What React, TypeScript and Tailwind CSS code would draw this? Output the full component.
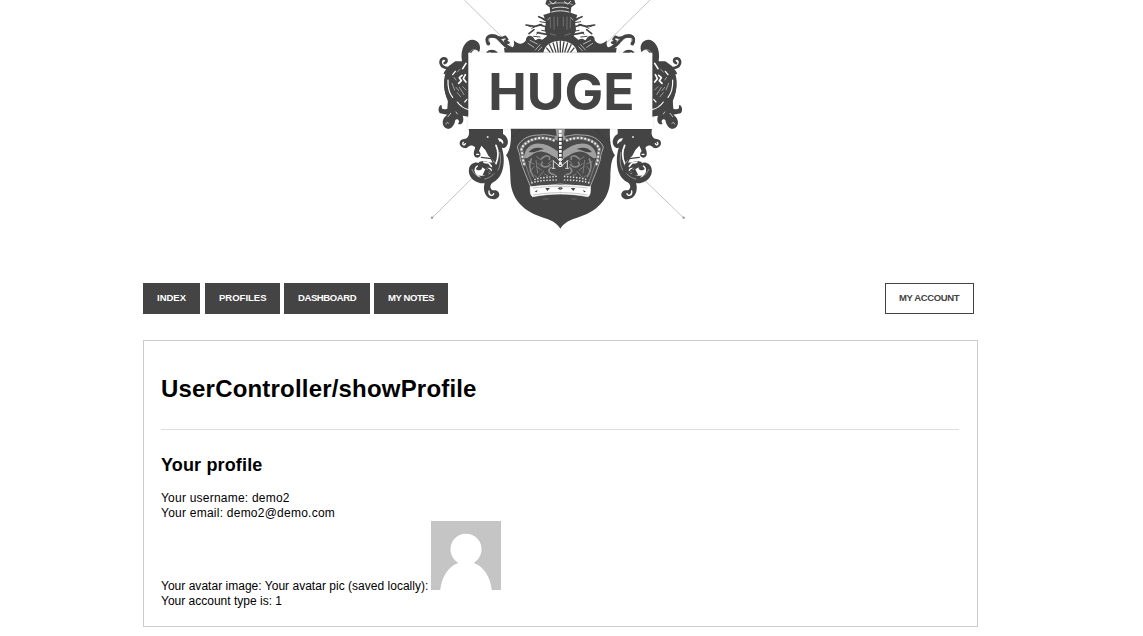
const DARK = "#444444";

function Scrollwork() {
  return (
    <g fill="none" stroke={DARK} strokeLinecap="round" strokeLinejoin="round">
      {/* outer upper curls */}
      <path fill={DARK} stroke="none" d="M126 184C119 142 140 118 158 119C178 121 185 140 177 157C172 146 158 146 154 160L148 160V346C118 342 96 328 84 304C68 268 68 226 86 198L106 184Z" />
      <path strokeWidth="8" d="M88 204C58 206 56 178 70 175C82 174 82 186 74 189" />
      <path strokeWidth="6" d="M74 220C80 206 92 202 100 198M76 240C74 262 78 284 88 300" />
      <g stroke="#fff" strokeWidth="4">
        <path d="M146 166C148 152 158 146 168 150" stroke="#bbb" strokeWidth="2" />
        <path d="M138 190L128 206M126 226L118 233L124 242L116 250M136 224L130 236L138 246" strokeWidth="5" />
        <path d="M106 214L98 224" strokeWidth="4" />
        <path d="M84 240C83 262 88 280 98 292M112 306C122 320 132 326 146 329M141 298L134 306" strokeWidth="3.5" />
        <path d="M96 250L104 270M120 208L112 216M112 278L122 290M102 232L108 240M118 262L132 284M108 262L116 272M128 260L138 270" strokeWidth="2" stroke="#ccc" />
      </g>
      {/* lower outer curls */}
      <path fill={DARK} stroke="none" d="M84 298L98 318C114 322 128 334 146 336V350L128 347C134 364 126 376 114 372C122 362 112 354 106 360C100 392 76 392 70 376C64 360 74 350 82 344L60 340C52 330 56 320 64 314C62 328 70 330 82 326Z" />
      <path strokeWidth="7" d="M62 320C58 330 62 338 74 336M74 364C70 384 94 386 92 374" />
      <path stroke="#ddd" strokeWidth="2.5" d="M92 340L84 350M108 336L112 342M78 372C80 366 84 366 86 370" />
      {/* inner upper scroll */}
      <path strokeWidth="11" d="M205 131C196 112 208 104 225 109C244 116 250 144 286 151" />
      <path strokeWidth="7" d="M218 109L246 114L256 110L262 118L254 124L266 128L252 132" />
      <path strokeWidth="2" stroke="#ddd" d="M228 116L240 128M244 118L252 126M208 114C204 118 206 124 208 126" />
      <path strokeWidth="6" d="M202 158C208 150 222 150 230 158M214 158H224" />
      <path fill={DARK} stroke="none" d="M252 143C275 148 286 144 281 121C294 134 309 135 318 121C317 110 326 103 338 110L346 121C356 112 363 117 369 121L379 158H254Z" />
      <path strokeWidth="2" stroke="#eee" d="M324 130L342 142M330 121L352 132M346 150L360 134M355 152L368 138" />
      {/* plume */}
      <path strokeWidth="5" d="M318 75L344 79L365 74M327 101L342 89M365 54L378 62M358 74L382 82M352 98L380 103M356 50L374 58" />
      <path strokeWidth="3" d="M335 85L350 78M350 103L356 96M365 91L380 94M341 109L360 111M322 76L332 80M360 65L384 69" />
      {/* foliage under the banner */}
      <path fill={DARK} stroke="none" d="M146 387H249V402C266 410 270 436 253 444C238 446 232 430 241 424L249 432C254 424 243 412 233 415C262 462 256 529 221 546C210 552 207 564 218 571C241 566 247 595 221 598C196 598 187 570 194 550C166 551 142 531 147 506C151 486 175 482 185 495C191 510 177 516 166 506C158 517 176 532 196 526C210 520 225 513 229 492L218 480L205 467L196 450L184 437L177 453C190 468 172 480 163 468C156 450 175 442 158 437C144 434 146 447 132 444C114 440 115 418 132 417C144 417 150 404 146 387Z" />
      <path fill={DARK} stroke="none" d="M176 486C196 478 212 492 226 486L230 508L206 530L188 524L196 508L186 502Z" />
      <path stroke="#fff" strokeWidth="5" d="M228 436C238 458 235 474 228 490M202 506C214 504 218 512 206 520M190 487L206 489L214 499" />
      <path stroke="#fff" strokeWidth="4" d="M196 468L206 484M177 529C164 521 162 504 172 498M207 573C205 587 218 590 221 581M130 427C125 434 132 438 136 431M170 463L176 463" />
      <circle cx="203" cy="411" r="3" fill="#ddd" stroke="none" />
      <path strokeWidth="4" d="M197 501L214 515L199 523M184 472L214 476L225 498M186 486L198 500" />
      <path stroke="#bbb" strokeWidth="2" d="M156 508C160 522 173 530 181 532M222 521C212 532 203 535 194 537M239 457C245 482 239 502 234 510" />
    </g>
  );
}

function CrownHalf() {
  return (
    <g fill="none" strokeLinecap="round" strokeLinejoin="round">
      <path fill="#4b4b4b" stroke="#aaa" strokeWidth="3" d="M421 409C395 411 385 401 361 405C328 404 303 416 292 441C294 454 301 461 301 479C309 507 321 533 332 561L421 552" />
      <path stroke="#777" strokeWidth="10" d="M401 421C365 405 318 418 304 446C308 463 307 479 313 494" />
      <path stroke="#eee" strokeWidth="6.5" strokeDasharray="0.1 11" d="M401 421C365 405 318 418 304 446C308 463 307 479 313 494" />
      <path fill="#a0a0a0" d="M312 474C313 447 332 429 359 431C390 432 403 450 421 458V476C401 476 389 456 367 455C345 453 334 468 321 475Z" />
      <path fill={DARK} d="M326 456C337 442 356 440 372 447C353 450 345 460 326 456Z" />
      <path stroke="#888" strokeWidth="5" d="M365 476C378 462 393 468 388 478M367 487C356 500 380 506 390 494M334 477C325 493 331 515 340 530M393 502C382 510 386 522 403 524" />
      <path stroke="#999" strokeWidth="2" d="M348 481L353 519M325 484L342 492M371 514L356 531M312 480L336 550M364 480L350 470M397 481L385 491M342 500L330 514M350 500L364 510M374 522L384 528M354 490L360 496M344 526L352 534" />
      <path stroke="#ddd" strokeWidth="5" strokeDasharray="0.1 9" d="M336 548C365 540 390 540 416 540M345 538C367 531 392 532 416 528" />
      <path stroke="#ddd" strokeWidth="3" d="M400 482V504M400 483L420 499M397 505H405" />
      <path fill="#fff" stroke="#fff" strokeWidth="2" d="M331 561C360 556 390 556 421 556V582C392 582 365 585 338 590C331 586 330 574 331 561Z" />
      <path stroke="#888" strokeWidth="1.5" d="M340 564C365 560 392 560 421 560M340 585C365 580 392 578 421 578" />
      <path fill={DARK} d="M344 575L353 569L350 577ZM376 564L390 564L382 573ZM413 565L421 560V571Z" />
    </g>
  );
}

function Logo() {
  return (
    <svg className="block h-[240px] w-[280px]" viewBox="0 0 840 720" role="img" aria-label="HUGE">
      <defs>
        <filter id="bannerShadow" x="-5%" y="-8%" width="110%" height="116%">
          <feDropShadow dx="0" dy="0" stdDeviation="5" floodColor="#000" floodOpacity="0.15" />
        </filter>
      </defs>
      <g stroke="#b8b8b8" strokeWidth="2.5">
        <path d="M133 0L278 143M690 0L545 143M35 655L158 533M792 655L674 541" />
      </g>
      <circle cx="36" cy="653" r="3.5" fill="#999" />
      <circle cx="791" cy="653" r="3.5" fill="#999" />
      <Scrollwork />
      <g transform="translate(842 0) scale(-1 1)">
        <Scrollwork />
      </g>
      {/* helmet */}
      <path fill={DARK} d="M380 0H463L467 12L454 22L452 38L472 45L465 65L468 90L461 108L480 124L470 158H372L361 124L381 108L374 90L378 65L370 45L391 38L389 22L376 12Z" />
      <g fill="none" stroke="#ddd" strokeLinecap="round" strokeWidth="3">
        <path d="M389 4L399 12L408 5M452 4L443 12L433 5M397 25C412 20 430 20 445 25M395 36C412 31 430 31 447 36" />
        <path d="M385 13C409 7 433 7 457 13M383 60L390 52M459 60L452 52" strokeWidth="2" />
        <path stroke="#888" strokeWidth="2" d="M391 56V84M402 51V88M413 52V78M430 52V78M441 51V88M451 56V84M391 101L407 106M451 101L435 106" />
      </g>
      <path fill="#fff" d="M370 158C375 132 397 123 421 122C445 123 467 132 472 158Z" />
      <path fill="none" stroke={DARK} strokeWidth="4" d="M379 143L391 158M388 133L400 158M399 128L408 158M410 124L415 158M421 121V158M432 124L427 158M443 128L434 158M454 133L442 158M463 143L451 158" />
      {/* shield */}
      <path fill={DARK} d="M272 380H570C568 424 573 450 585 466C573 478 572 503 571 530C572 611 514 642 462 656C441 663 430 672 421 686C412 672 401 663 380 656C328 642 270 611 271 530C270 503 269 478 258 466C271 450 275 424 272 380Z" />
      <path stroke="#383838" strokeWidth="2" d="M277 412L303 387M525 387L568 430" />
      <CrownHalf />
      <g transform="translate(842 0) scale(-1 1)">
        <CrownHalf />
      </g>
      <path fill="#999" d="M407 387H435L432 409L441 416L427 423H415L401 416L410 409Z" />
      <path fill="none" stroke={DARK} strokeWidth="15" d="M421 410V485" />
      <path fill="none" stroke="#fff" strokeWidth="8" strokeDasharray="8 4" d="M421 390V501" />
      <path fill="none" stroke="#eee" strokeWidth="3" d="M412 475L421 485L430 475M414 499L421 488L428 499" />
      <path stroke="#666" strokeWidth="3" d="M369 597H385M454 597H470" />
      {/* banner */}
      <path filter="url(#bannerShadow)" fill="#fff" d="M145 158H697V386H145Z" />
      <text x="205" y="329" textLength="439" lengthAdjust="spacingAndGlyphs" fill={DARK} fontFamily="Inter, 'Open Sans', sans-serif" fontWeight="700" fontSize="151">
        HUGE
      </text>
    </svg>
  );
}

function Avatar() {
  return (
    <svg className="ml-[3px] block h-[69px] w-[70px] shrink-0" viewBox="0 0 70 69" aria-label="avatar">
      <path fill="#c5c5c5" d="M0 0H70V69H0Z" />
      <path fill="#fff" stroke="#b9b9b9" strokeWidth="0.7" d="M8.7 69.5C10 57 16 46 26.5 41.8A16 16 0 1 1 43.5 41.8C54 46 60 57 61.3 69.5Z" />
    </svg>
  );
}

const navItems = [
  { label: "INDEX", box: "w-[57px]" },
  { label: "PROFILES", box: "ml-[5px] w-[75px]" },
  { label: "DASHBOARD", box: "ml-1 w-[86px] tracking-[-0.4px]" },
  { label: "MY NOTES", box: "ml-1 w-[74px] tracking-[-0.4px]" },
];

export default function App() {
  return (
    <div className="h-[636px] overflow-hidden bg-white pl-[143px] font-['Liberation_Sans',Arial,sans-serif] text-[12px] leading-[15px] text-black">
      <header className="flex h-[283px] w-[835px] items-start pl-[277px]">
        <Logo />
      </header>
      <nav className="flex h-[31px] w-[831px] text-[9.5px] font-bold">
        {navItems.map((item) => (
          <a key={item.label} href="#" className={`flex items-center pb-[3px] pl-[14px] whitespace-nowrap bg-[#444] text-white ${item.box}`}>
            {item.label}
          </a>
        ))}
        <a href="#" className="ml-auto flex w-[89px] items-center border border-[#444] pb-[3px] pl-[13px] tracking-[-0.36px] whitespace-nowrap text-[#444]">
          MY ACCOUNT
        </a>
      </nav>
      <main className="mt-[26px] h-[287px] w-[835px] border border-[#ccc] pr-[18px] pl-[17px]">
        <h1 className="pt-[33px] text-[24px] leading-[30px] font-bold tracking-[0.19px]">UserController/showProfile</h1>
        <hr className="mt-[25px] border-[#ddd]" />
        <h2 className="mt-[23px] text-[18px] leading-[24px] font-bold tracking-[0.15px]">Your profile</h2>
        <div className="mt-[14px]">
          <p className="tracking-[0.22px]">Your username: demo2</p>
          <p className="tracking-[0.24px]">Your email: demo2@demo.com</p>
          <div className="flex h-[73px] items-start">
            <p className="mt-[58px] w-[267px] tracking-[0.02px] whitespace-nowrap">Your avatar image: Your avatar pic (saved locally):</p>
            <Avatar />
          </div>
          <p>Your account type is: 1</p>
        </div>
      </main>
    </div>
  );
}
